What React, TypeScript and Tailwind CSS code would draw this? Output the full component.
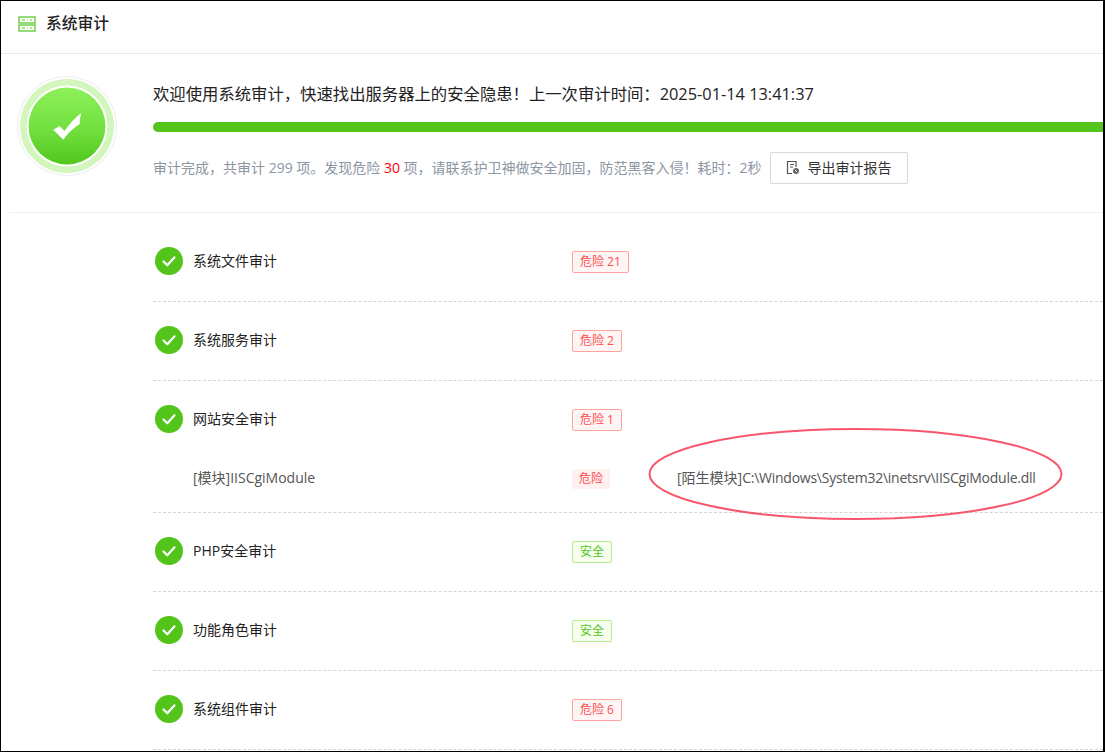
import React from 'react';

type AuditRow = {
    name: string;
    safe: boolean;
    label: string;
    detail?: { name: string; prefix: string; path: string };
};

const rows: AuditRow[] = [
    { name: '系统文件审计', safe: false, label: '危险 21' },
    { name: '系统服务审计', safe: false, label: '危险 2' },
    {
        name: '网站安全审计',
        safe: false,
        label: '危险 1',
        detail: { name: '[模块]IISCgiModule', prefix: '[陌生模块]', path: 'C:\\Windows\\System32\\inetsrv\\IISCgiModule.dll' },
    },
    { name: 'PHP安全审计', safe: true, label: '安全' },
    { name: '功能角色审计', safe: true, label: '安全' },
    { name: '系统组件审计', safe: false, label: '危险 6' },
];

function ServerIcon() {
    return (
        <svg width="18" height="16" viewBox="0 0 18 16" className="shrink-0">
            <rect x="1" y="1" width="16" height="6" fill="none" stroke="#6fd14a" strokeWidth="1.5" />
            <rect x="1" y="9" width="16" height="6" fill="none" stroke="#6fd14a" strokeWidth="1.5" />
            <path d="M4 4h3M9 4h1M12 4h2M4 12h3M9 12h1M12 12h2" stroke="#8fdc70" strokeWidth="1.5" />
        </svg>
    );
}

function BigBadge() {
    return (
        <svg width="100" height="100" viewBox="0 0 100 100" className="shrink-0">
            <defs>
                <linearGradient id="ball" x1="0" y1="0" x2="0" y2="1">
                    <stop offset="0" stopColor="#8df05a" />
                    <stop offset="0.55" stopColor="#72e03f" />
                    <stop offset="1" stopColor="#52c71c" />
                </linearGradient>
            </defs>
            <circle cx="50" cy="50" r="49.5" fill="#fff" stroke="#ececec" />
            <circle cx="50" cy="50" r="47" fill="#d2f6bb" />
            <circle cx="50" cy="50" r="40.5" fill="#fff" />
            <circle cx="50" cy="50" r="38.5" fill="url(#ball)" />
            <path d="M36.3 53.7 L42.5 50 L47.5 55 Q55 44 64.3 37 Q62.5 43 62.7 48 Q53 54 46.3 63.7 Z" fill="#fff" />
        </svg>
    );
}

function RowCheck() {
    return (
        <svg width="28" height="28" viewBox="0 0 28 28" className="shrink-0">
            <circle cx="14" cy="14" r="14" fill="#52c41a" />
            <path d="M8.5 14.5l3.8 3.8 7.2-8" fill="none" stroke="#fff" strokeWidth="2.2" strokeLinecap="round" strokeLinejoin="round" />
        </svg>
    );
}

function ReportIcon() {
    return (
        <svg width="14" height="15" viewBox="0 0 14 15" className="shrink-0">
            <path d="M10 7V1.5H1.5v12H6" fill="none" stroke="#555" strokeWidth="1.2" />
            <path d="M4 4.5h4M4 7h3" stroke="#555" strokeWidth="1.2" />
            <circle cx="10" cy="11" r="3" fill="#666" />
            <path d="M8.8 9.8l2.4 2.4" stroke="#fff" strokeWidth="0.9" />
        </svg>
    );
}

function Tag({ safe, label }: { safe: boolean; label: string }) {
    return (
        <span
            className={`mt-[2px] inline-flex h-[22px] items-center rounded-[2px] border px-[7px] text-[12px] ${
                safe ? 'border-[#b7eb8f] bg-[#f6ffed] text-[#52c41a]' : 'border-[#ffa39e] bg-[#fff5f4] text-[#ff4d4f]'
            }`}
        >
            {label}
        </span>
    );
}

export default function App() {
    return (
        <div
            className="relative h-[752px] w-[1105px] overflow-hidden border border-r-2 border-black bg-white text-[#333]"
            style={{ fontFamily: '"Open Sans", "Noto Sans CJK SC", sans-serif' }}
        >
            {/* Title bar */}
            <div className="flex h-[53px] items-center gap-[10px] border-b border-[#e8e8e8] pb-[6px] pl-[17px]">
                <ServerIcon />
                <h1 className="text-[15.75px] font-medium text-[#222]">系统审计</h1>
            </div>

            {/* Summary */}
            <div className="ml-[8px] flex h-[159px] items-start border-b border-[#eeeeee]">
                <div className="ml-[8px] mt-[22px]">
                    <BigBadge />
                </div>
                <div className="ml-[36px] mt-[28px] w-[960px] shrink-0">
                    <p className="h-[24px] whitespace-nowrap text-[16.35px] leading-[24px] text-[#222]">
                        欢迎使用系统审计，快速找出服务器上的安全隐患！上一次审计时间：2025-01-14 13:41:37
                    </p>
                    <div className="mt-[16px] h-[10px] rounded-l-full bg-[#52c41a]" />
                    <div className="mt-[20px] flex items-center">
                        <p className="pb-[2px] text-[14px] text-[#8c96a3]">
                            审计完成，共审计 299 项。发现危险 <span className="text-[#ff0000]">30</span> 项，请联系护卫神做安全加固，防范黑客入侵！耗时：2秒
                        </p>
                        <button className="ml-[8px] flex h-[32px] w-[138px] items-center justify-center gap-[8px] rounded-[2px] border border-[#d9d9d9] bg-white pb-[2px] text-[14px] text-[#333]">
                            <ReportIcon />
                            导出审计报告
                        </button>
                    </div>
                </div>
            </div>

            {/* Audit rows */}
            <div className="ml-[152px] w-[960px] pt-[10px]">
                {rows.map(row => (
                    <div key={row.name} className="border-b border-dashed border-[#d4d4d4]">
                        <div className="flex h-[78px] items-center pb-[2px]">
                            <div className="flex w-[419px] items-center gap-[10px] text-[14px] text-[#222]">
                                <div className="ml-[2px]">
                                    <RowCheck />
                                </div>
                                <span className="pb-[2px]">{row.name}</span>
                            </div>
                            <Tag safe={row.safe} label={row.label} />
                        </div>
                        {row.detail && (
                            <div className="flex h-[53px] items-center pb-[13px] text-[14px] text-[#555]">
                                <div className="w-[419px] pb-[4px] pl-[40px]">{row.detail.name}</div>
                                <span className="flex h-[20px] w-[38px] items-center justify-center rounded-[2px] bg-[#fff1f0] text-[12px] text-[#ff4d4f]">
                                    危险
                                </span>
                                <div className="ml-[67px] pb-[4px]">
                                    {row.detail.prefix}
                                    <span className="tracking-[-0.25px]">{row.detail.path}</span>
                                </div>
                            </div>
                        )}
                    </div>
                ))}
            </div>

            {/* Hand drawn annotation */}
            <svg width="420" height="100" viewBox="0 0 420 100" fill="none" className="absolute left-[645px] top-[424px]">
                <ellipse cx="209.5" cy="49" rx="206" ry="45" stroke="#f9566e" strokeWidth="2" />
            </svg>
        </div>
    );
}
